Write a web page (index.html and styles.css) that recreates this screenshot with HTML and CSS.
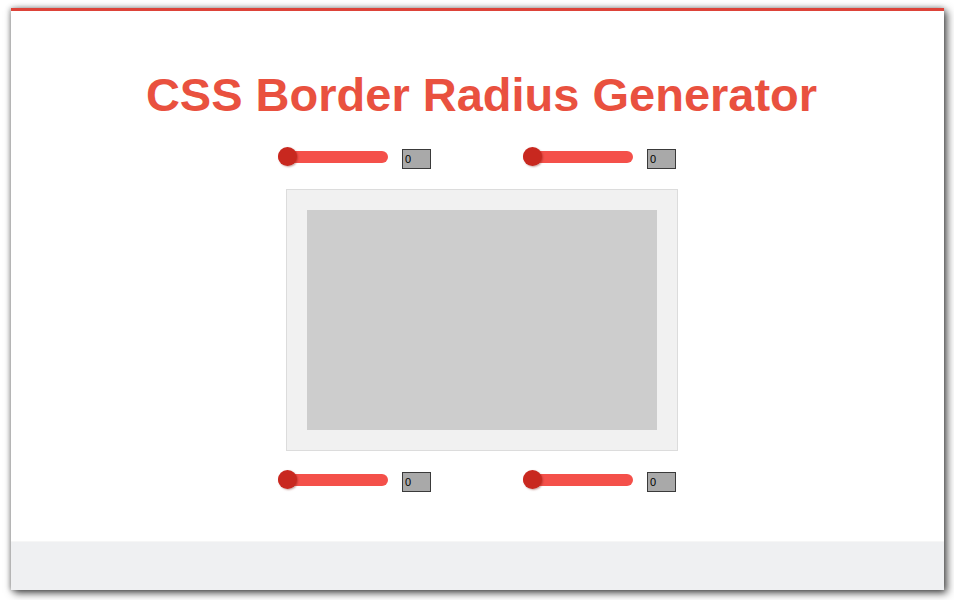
FILE: index.html
```html
<!DOCTYPE html>
<html lang="en">
<head>
<meta charset="utf-8">
<title>CSS Border Radius Generator</title>
<link rel="stylesheet" href="styles.css">
</head>
<body>
<div class="window">
  <main class="main">
    <h1 class="title">CSS Border Radius Generator</h1>
    <div class="row row-top">
      <div class="control">
        <input class="range" type="range" min="0" max="100" value="0">
        <input class="num" type="text" value="0">
      </div>
      <div class="control">
        <input class="range" type="range" min="0" max="100" value="0">
        <input class="num" type="text" value="0">
      </div>
    </div>
    <div class="preview-wrap">
      <div class="preview">
        <div class="shape"></div>
      </div>
    </div>
    <div class="row row-bottom">
      <div class="control">
        <input class="range" type="range" min="0" max="100" value="0">
        <input class="num" type="text" value="0">
      </div>
      <div class="control">
        <input class="range" type="range" min="0" max="100" value="0">
        <input class="num" type="text" value="0">
      </div>
    </div>
  </main>
  <footer class="footer"></footer>
</div>
</body>
</html>
```
FILE: styles.css
```css
html, body {
  margin: 0;
  padding: 0;
  background: #ffffff;
}
body {
  padding: 8px 10px 10px 11px;
  font-family: "Liberation Sans", Arial, sans-serif;
}
.window {
  width: 933px;
  height: 582px;
  box-sizing: border-box;
  border-top: 3px solid #dd4339;
  background: #ffffff;
  box-shadow: 3px 3px 8px rgba(0, 0, 0, 0.7), -1px 0 5px rgba(0, 0, 0, 0.3);
  display: flex;
  flex-direction: column;
}
.main {
  flex: 1;
  display: flex;
  flex-direction: column;
  align-items: center;
}
.title {
  margin: 57px 0 0 8px;
  font-size: 47px;
  line-height: 54px;
  font-weight: bold;
  color: #e9513f;
  letter-spacing: 0;
}
.row {
  display: flex;
  gap: 92px;
  height: 20px;
  margin-left: -1px;
}
.row-top {
  margin-top: 25px;
}
.row-bottom {
  margin-top: 19px;
}
.control {
  display: flex;
  align-items: center;
  gap: 14px;
}
.range {
  -webkit-appearance: none;
  appearance: none;
  width: 110px;
  height: 12px;
  margin: 0 0 1px 0;
  border-radius: 6px;
  background: #f4504a;
  outline: none;
}
.range::-webkit-slider-thumb {
  -webkit-appearance: none;
  appearance: none;
  width: 19px;
  height: 19px;
  border-radius: 50%;
  background: #c8281f;
  box-shadow: 1px 1px 2px rgba(120, 20, 10, 0.4);
  cursor: pointer;
}
.num {
  width: 29px;
  height: 20px;
  margin: 4px 0 0 0;
  box-sizing: border-box;
  padding: 0 0 0 2px;
  border: 1px solid #3a3a3a;
  background: #a9a9a9;
  font-family: "Liberation Sans", Arial, sans-serif;
  font-size: 11px;
  color: #000;
}
.preview-wrap {
  margin-top: 22px;
  padding-left: 9px;
}
.preview {
  width: 350px;
  height: 220px;
  padding: 20px;
  border: 1px solid #dcdcdc;
  background: #f1f1f1;
}
.shape {
  width: 350px;
  height: 220px;
  background: #cdcdcd;
}
.footer {
  height: 49px;
  box-sizing: border-box;
  border-top: 1px solid #f6f6f6;
  background: #eff0f2;
}
```
